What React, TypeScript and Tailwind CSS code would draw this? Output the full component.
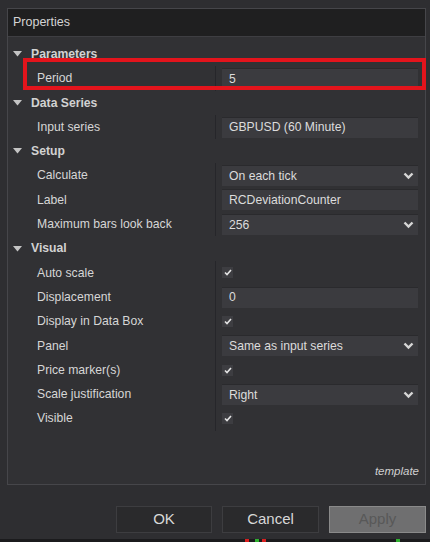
import { ReactNode } from "react";

type Row =
  | { kind: "cat"; label: string }
  | { kind: "prop"; label: string; value?: string; type: "text" | "select" | "check" };

const rows: Row[] = [
  { kind: "cat", label: "Parameters" },
  { kind: "prop", label: "Period", value: "5", type: "text" },
  { kind: "cat", label: "Data Series" },
  { kind: "prop", label: "Input series", value: "GBPUSD (60 Minute)", type: "text" },
  { kind: "cat", label: "Setup" },
  { kind: "prop", label: "Calculate", value: "On each tick", type: "select" },
  { kind: "prop", label: "Label", value: "RCDeviationCounter", type: "text" },
  { kind: "prop", label: "Maximum bars look back", value: "256", type: "select" },
  { kind: "cat", label: "Visual" },
  { kind: "prop", label: "Auto scale", type: "check" },
  { kind: "prop", label: "Displacement", value: "0", type: "text" },
  { kind: "prop", label: "Display in Data Box", type: "check" },
  { kind: "prop", label: "Panel", value: "Same as input series", type: "select" },
  { kind: "prop", label: "Price marker(s)", type: "check" },
  { kind: "prop", label: "Scale justification", value: "Right", type: "select" },
  { kind: "prop", label: "Visible", type: "check" },
];

function Caret() {
  return (
    <svg width="9" height="6" viewBox="0 0 9 6" className="shrink-0">
      <path d="M0 0 L9 0 L4.5 5.5 Z" fill="#c4c4c4" />
    </svg>
  );
}

function Chevron() {
  return (
    <svg width="11" height="8" viewBox="0 0 11 8" className="shrink-0">
      <path d="M1.5 1.5 L5.5 5.5 L9.5 1.5" stroke="#d6d6d6" strokeWidth="2.4" fill="none" />
    </svg>
  );
}

function Field({ children }: { children: ReactNode }) {
  return (
    <div className="flex items-center justify-between h-[21px] w-[196px] bg-[#3b3b3f] border-t border-[#2a2a2d] pl-[7px] pr-[4px] text-[12.2px] text-[#dcdcdc]">
      {children}
    </div>
  );
}

function Value({ row }: { row: Extract<Row, { kind: "prop" }> }) {
  if (row.type === "check") {
    return (
      <div className="flex items-center justify-center w-[11px] h-[11px] bg-[#3d3d41]">
        <svg width="8" height="7" viewBox="0 0 8 7">
          <path d="M1 3.5 L3 5.5 L7 1" stroke="#e4e4e4" strokeWidth="1.6" fill="none" />
        </svg>
      </div>
    );
  }
  return (
    <Field>
      <span>{row.value}</span>
      {row.type === "select" && <Chevron />}
    </Field>
  );
}

export default function App() {
  return (
    <div
      className="relative w-[430px] h-[542px] bg-[#2e2e31] overflow-hidden"
      style={{ fontFamily: '"Liberation Sans", Arial, sans-serif' }}
    >
      {/* Properties panel */}
      <div className="absolute left-[7px] top-[8px] w-[419px] h-[477px] border border-[#46464a] bg-[#313134] flex flex-col">
        <div className="h-[28px] bg-[#1f1f20] border-b border-[#3e3e42] flex items-center pl-[5px] text-[12.5px] text-[#d4d4d4]">
          Properties
        </div>

        <div className="pt-[5px] flex flex-col">
          {rows.map((row, i) =>
            row.kind === "cat" ? (
              <div key={i} className="h-[24.3px] flex items-center gap-[9px] pl-[5px]">
                <Caret />
                <span className="text-[12.2px] font-bold text-[#d2d2d2]">{row.label}</span>
              </div>
            ) : (
              <div key={i} className="h-[24.3px] flex items-center">
                <div className="w-[207px] pl-[29px] text-[12.2px] text-[#d6d6d6]">{row.label}</div>
                <div className="h-full flex items-center border-l border-[#26262a] pl-[6px]">
                  <Value row={row} />
                </div>
              </div>
            )
          )}
        </div>

        <div className="mt-auto flex justify-end pr-[6px] pb-[4px] text-[11.5px] italic text-[#cfcfcf]">
          template
        </div>
      </div>

      {/* Highlight around Period */}
      <div className="absolute left-[23px] top-[58px] w-[403px] h-[32px] border-[4px] border-[#e3141c]" />

      {/* Buttons */}
      <div className="absolute left-[116px] top-[506px] flex gap-[10px]">
        <button className="w-[96px] h-[27px] bg-[#2a2a2c] border border-[#3d3d40] text-[15px] text-[#d8d8d8]">OK</button>
        <button className="w-[97px] h-[27px] bg-[#2a2a2c] border border-[#3d3d40] text-[15px] text-[#d8d8d8]">Cancel</button>
        <button className="w-[97px] h-[27px] bg-[#6f6f70] border border-[#8a8a8a] text-[15px] text-[#585858]">Apply</button>
      </div>

      {/* bottom strip */}
      <div className="absolute left-0 bottom-0 w-full h-[3px] bg-[#1b1b1d] flex">
        <div className="ml-[245px] w-[4px] bg-[#d92020]" />
        <div className="ml-[6px] w-[4px] bg-[#30b030]" />
        <div className="ml-[3px] w-[4px] bg-[#d92020]" />
        <div className="ml-[130px] w-[4px] bg-[#30b030]" />
      </div>
    </div>
  );
}
